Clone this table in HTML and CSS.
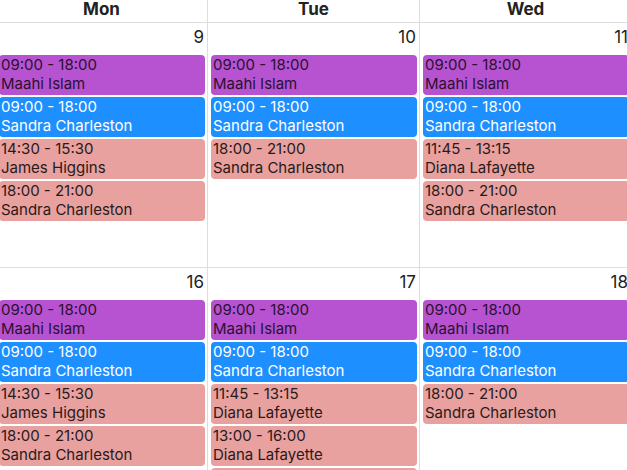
FILE: index.html
```html
<!DOCTYPE html>
<html>
<head>
<meta charset="utf-8">
<link rel="stylesheet" href="styles.css">
</head>
<body>
<div class="cal">
  <div class="head">Mon</div>
  <div class="head">Tue</div>
  <div class="head">Wed</div>

  <div class="day">
    <div class="num">9</div>
    <div class="ev purple"><div>09:00 - 18:00</div><div>Maahi Islam</div></div>
    <div class="ev blue"><div>09:00 - 18:00</div><div>Sandra Charleston</div></div>
    <div class="ev pink"><div>14:30 - 15:30</div><div>James Higgins</div></div>
    <div class="ev pink"><div>18:00 - 21:00</div><div>Sandra Charleston</div></div>
  </div>
  <div class="day">
    <div class="num">10</div>
    <div class="ev purple"><div>09:00 - 18:00</div><div>Maahi Islam</div></div>
    <div class="ev blue"><div>09:00 - 18:00</div><div>Sandra Charleston</div></div>
    <div class="ev pink"><div>18:00 - 21:00</div><div>Sandra Charleston</div></div>
  </div>
  <div class="day">
    <div class="num">11</div>
    <div class="ev purple"><div>09:00 - 18:00</div><div>Maahi Islam</div></div>
    <div class="ev blue"><div>09:00 - 18:00</div><div>Sandra Charleston</div></div>
    <div class="ev pink"><div>11:45 - 13:15</div><div>Diana Lafayette</div></div>
    <div class="ev pink"><div>18:00 - 21:00</div><div>Sandra Charleston</div></div>
  </div>

  <div class="day">
    <div class="num">16</div>
    <div class="ev purple"><div>09:00 - 18:00</div><div>Maahi Islam</div></div>
    <div class="ev blue"><div>09:00 - 18:00</div><div>Sandra Charleston</div></div>
    <div class="ev pink"><div>14:30 - 15:30</div><div>James Higgins</div></div>
    <div class="ev pink"><div>18:00 - 21:00</div><div>Sandra Charleston</div></div>
  </div>
  <div class="day">
    <div class="num">17</div>
    <div class="ev purple"><div>09:00 - 18:00</div><div>Maahi Islam</div></div>
    <div class="ev blue"><div>09:00 - 18:00</div><div>Sandra Charleston</div></div>
    <div class="ev pink"><div>11:45 - 13:15</div><div>Diana Lafayette</div></div>
    <div class="ev pink"><div>13:00 - 16:00</div><div>Diana Lafayette</div></div>
    <div class="ev pink"><div>14:30 - 15:30</div><div>James Higgins</div></div>
  </div>
  <div class="day">
    <div class="num">18</div>
    <div class="ev purple"><div>09:00 - 18:00</div><div>Maahi Islam</div></div>
    <div class="ev blue"><div>09:00 - 18:00</div><div>Sandra Charleston</div></div>
    <div class="ev pink"><div>18:00 - 21:00</div><div>Sandra Charleston</div></div>
  </div>
</div>
</body>
</html>
```

FILE: styles.css
```css
html, body {
  margin: 0;
  padding: 0;
  background: #fff;
  overflow: hidden;
}
body {
  font-family: Inter, "Noto Sans", sans-serif;
  color: #1f1f1f;
  width: 627px;
  height: 470px;
}
.cal {
  display: grid;
  grid-template-columns: repeat(3, 212px);
  grid-template-rows: 23px 245px 244px;
  margin-left: -4px;
  width: 636px;
}
.head {
  border-right: 1px solid #dddddd;
  border-bottom: 1px solid #dddddd;
  text-align: center;
  font-weight: 700;
  font-size: 17px;
  line-height: 18px;
  color: #222;
}
.day {
  border-right: 1px solid #dddddd;
  border-bottom: 1px solid #dddddd;
  display: flex;
  flex-direction: column;
  gap: 2px;
}
.num {
  text-align: right;
  font-size: 17px;
  line-height: 22px;
  height: 30px;
  padding: 3px 3px 0 0;
  box-sizing: border-box;
  color: #222;
}
.ev {
  margin: 0 2px 0 3px;
  height: 40px;
  box-sizing: border-box;
  border-radius: 4px;
  padding: 0 2px;
  font-size: 15px;
  line-height: 19px;
}
.purple { background: #b753d0; color: #2a1030; }
.blue { background: #1e8fff; color: #fff; }
.pink { background: #e8a19f; color: #2a1a1a; }
```
